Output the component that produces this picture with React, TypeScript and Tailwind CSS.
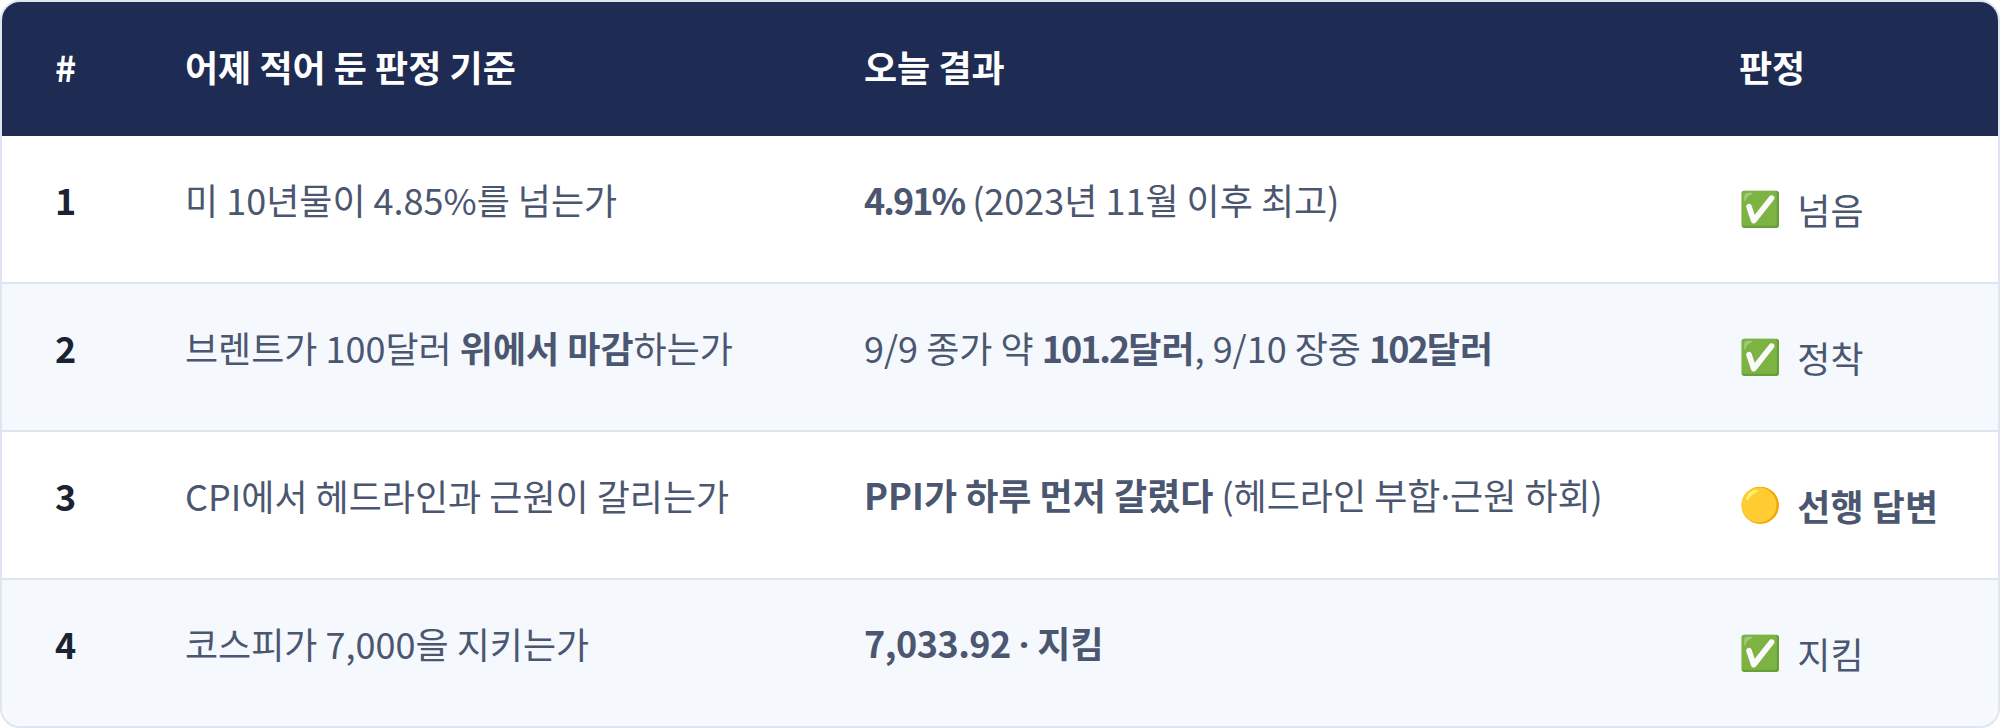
import React from "react";

type Row = {
  n: string;
  criterion: React.ReactNode;
  result: React.ReactNode;
  emoji: string;
  verdict: React.ReactNode;
  striped: boolean;
};

const Dot = () => (
  <span style={{ fontFamily: '"Noto Sans", sans-serif' }}>·</span>
);

const B = ({ children }: { children: React.ReactNode }) => (
  <b className="font-bold">{children}</b>
);

const rows: Row[] = [
  {
    n: "1",
    criterion: <>미 10년물이 4.85%를 넘는가</>,
    result: (
      <>
        <B>
          <span className="tracking-[-2px]">4.91%</span>
        </B>{" "}
        (2023년 11월 이후 최고)
      </>
    ),
    emoji: "✅",
    verdict: <>넘음</>,
    striped: false,
  },
  {
    n: "2",
    criterion: (
      <>
        브렌트가 100달러 <B>위에서 마감</B>하는가
      </>
    ),
    result: (
      <>
        9/9 종가 약{" "}
        <B>
          <span className="tracking-[-2px]">101.2</span>달러
        </B>
        , 9/10 장중{" "}
        <B>
          <span className="tracking-[-2px]">102</span>달러
        </B>
      </>
    ),
    emoji: "✅",
    verdict: <>정착</>,
    striped: true,
  },
  {
    n: "3",
    criterion: <>CPI에서 헤드라인과 근원이 갈리는가</>,
    result: (
      <>
        <B>PPI가 하루 먼저 갈렸다</B> (헤드라인 부합
        <Dot />
        근원 하회)
      </>
    ),
    emoji: "🟡",
    verdict: <B>선행 답변</B>,
    striped: false,
  },
  {
    n: "4",
    criterion: <>코스피가 7,000을 지키는가</>,
    result: (
      <B>
        <span className="tracking-[-0.5px]">7,033.92</span> <Dot /> 지킴
      </B>
    ),
    emoji: "✅",
    verdict: <>지킴</>,
    striped: true,
  },
];

export default function App() {
  return (
    <div
      className="w-[2000px] h-[728px] bg-white"
      style={{ fontFamily: '"Noto Sans CJK KR", "Noto Sans", sans-serif' }}
    >
      <div className="w-full h-full rounded-[20px] border-2 border-[#dfe5f0] overflow-hidden flex flex-col">
        <div className="h-[134px] shrink-0 bg-[#1e2b53] grid grid-cols-[130px_679px_875px_1fr] items-center text-white font-bold text-[36px] leading-none">
          <div className="pl-[53px] pb-[6px]">#</div>
          <div className="pl-[53px] pb-[6px]">어제 적어 둔 판정 기준</div>
          <div className="pl-[53px] pb-[6px]">오늘 결과</div>
          <div className="pl-[53px] pb-[6px]">판정</div>
        </div>
        {rows.map((r, i) => (
          <div
            key={r.n}
            className={
              "grid grid-cols-[130px_679px_875px_1fr] items-center text-[36px] leading-none text-[#4b5670] " +
              (i === 0 ? "h-[146px] " : "h-[148px] border-t-2 border-[#dfe5f0] ") +
              (r.striped ? "bg-[#f5f8fd]" : "bg-white")
            }
          >
            <div className="pl-[53px] pb-[20px] font-semibold text-[#1b2232]">{r.n}</div>
            <div className="pl-[53px] pb-[20px] whitespace-nowrap">{r.criterion}</div>
            <div className="pl-[53px] pb-[20px] whitespace-nowrap">{r.result}</div>
            <div className="pl-[53px] whitespace-nowrap flex items-center gap-[16px]">
              <span
                className="text-[34px]"
                style={{ fontFamily: '"Noto Color Emoji", "Apple Color Emoji", sans-serif' }}
              >
                {r.emoji}
              </span>
              <span>{r.verdict}</span>
            </div>
          </div>
        ))}
      </div>
    </div>
  );
}
